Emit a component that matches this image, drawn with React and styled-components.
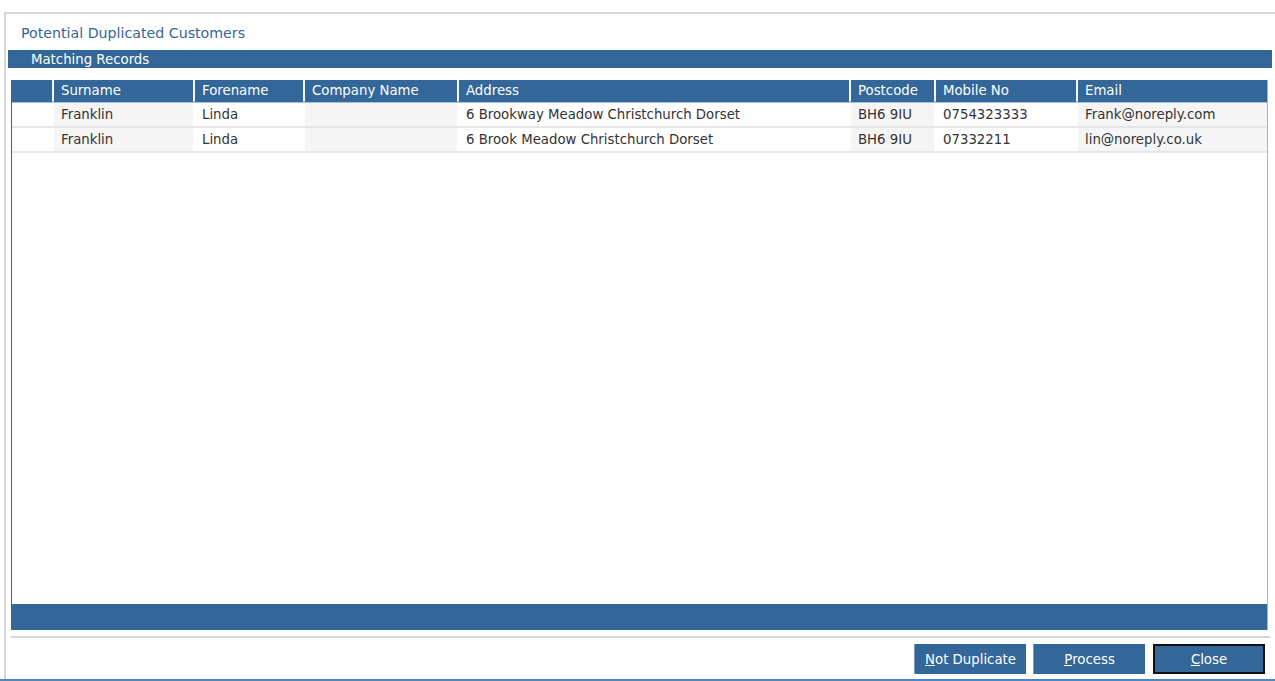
import React from "react";
import styled, { createGlobalStyle } from "styled-components";

const GlobalStyle = createGlobalStyle`
  html, body {
    margin: 0;
    padding: 0;
    background: #fff;
    overflow: hidden;
  }
  * {
    box-sizing: border-box;
  }
`;

const columns = [
  { key: "surname", label: "Surname", shaded: true },
  { key: "forename", label: "Forename", shaded: false },
  { key: "company", label: "Company Name", shaded: true },
  { key: "address", label: "Address", shaded: false },
  { key: "postcode", label: "Postcode", shaded: true },
  { key: "mobile", label: "Mobile No", shaded: false },
  { key: "email", label: "Email", shaded: true },
];

const records = [
  {
    surname: "Franklin",
    forename: "Linda",
    company: "",
    address: "6 Brookway Meadow Christchurch Dorset",
    postcode: "BH6 9IU",
    mobile: "0754323333",
    email: "Frank@noreply.com",
  },
  {
    surname: "Franklin",
    forename: "Linda",
    company: "",
    address: "6 Brook Meadow Christchurch Dorset",
    postcode: "BH6 9IU",
    mobile: "07332211",
    email: "lin@noreply.co.uk",
  },
];

const App = () => {
  return (
    <Page>
      <GlobalStyle />
      <Dialog>
        <Title>Potential Duplicated Customers</Title>
        <SectionBar>Matching Records</SectionBar>
        <Grid>
          <HeaderRow>
            <HeaderCell />
            {columns.map((c) => (
              <HeaderCell key={c.key}>{c.label}</HeaderCell>
            ))}
          </HeaderRow>
          {records.map((r, i) => (
            <DataRow key={i}>
              <Cell />
              {columns.map((c) => (
                <Cell key={c.key} $shaded={c.shaded}>
                  {r[c.key]}
                </Cell>
              ))}
            </DataRow>
          ))}
          <GridBody />
          <GridFooter />
        </Grid>
        <Divider />
        <ButtonBar>
          <Button>
            <u>N</u>ot Duplicate
          </Button>
          <Button>
            <u>P</u>rocess
          </Button>
          <Button $focused>
            <u>C</u>lose
          </Button>
        </ButtonBar>
      </Dialog>
    </Page>
  );
};

export default App;

const Page = styled.div`
  width: 1275px;
  height: 681px;
  padding-top: 12px;
  display: flex;
  flex-direction: column;
  border-bottom: 2px solid #4a88c8;
  font-family: "DejaVu Sans", "Liberation Sans", sans-serif;
`;

const Dialog = styled.div`
  flex: 1;
  margin-left: 4px;
  border-top: 2px solid #d6d6d6;
  border-left: 2px solid #d6d6d6;
  display: flex;
  flex-direction: column;
  background: #fff;
`;

const Title = styled.div`
  height: 36px;
  line-height: 38px;
  padding-left: 15px;
  font-size: 14.2px;
  color: #336699;
`;

const SectionBar = styled.div`
  height: 18px;
  line-height: 20px;
  margin: 0 3px 0 2px;
  padding-left: 23px;
  background: #336699;
  color: #fff;
  font-size: 13.3px;
`;

const Grid = styled.div`
  height: 550px;
  margin: 12px 7px 0 5px;
  border-left: 1px solid #336699;
  border-right: 1px solid #9db8d4;
  display: flex;
  flex-direction: column;
  background: #fff;
`;

const rowTemplate = `
  display: grid;
  grid-template-columns: 40px 139px 108px 152px 390px 83px 140px 1fr;
  column-gap: 2px;
`;

const HeaderRow = styled.div`
  ${rowTemplate}
  height: 23px;
  border-bottom: 2px solid #a9c2dc;
  background: #f2f6fa;
`;

const HeaderCell = styled.div`
  background: #336699;
  color: #fff;
  font-size: 13.3px;
  line-height: 22px;
  padding-left: 7px;
  white-space: nowrap;
`;

const DataRow = styled.div`
  ${rowTemplate}
  height: 25px;
  border-bottom: 2px solid #e6e6e6;
  background: #fff;
`;

const Cell = styled.div`
  background: ${(p) => (p.$shaded ? "#f5f5f5" : "#fff")};
  color: #333;
  font-size: 13.3px;
  line-height: 23px;
  padding-left: 7px;
  white-space: nowrap;
`;

const GridBody = styled.div`
  flex: 1;
`;

const GridFooter = styled.div`
  height: 26px;
  background: #336699;
`;

const Divider = styled.div`
  height: 2px;
  margin: 6px 5px 0 5px;
  background: #d6d6d6;
`;

const ButtonBar = styled.div`
  display: flex;
  justify-content: flex-end;
  gap: 7px;
  margin-top: 6px;
  padding-right: 10px;
`;

const Button = styled.div`
  width: 112px;
  height: 30px;
  margin-left: ${(p) => (p.$focused ? "1px" : "0")};
  background: #336699;
  color: #fff;
  font-size: 13.3px;
  display: flex;
  align-items: center;
  justify-content: center;
  border: ${(p) => (p.$focused ? "2px solid #111" : "none")};
  border-left: ${(p) => (p.$focused ? "2px solid #111" : "1px solid #7a9cc0")};
  cursor: pointer;
  u {
    text-decoration: underline;
  }
`;
